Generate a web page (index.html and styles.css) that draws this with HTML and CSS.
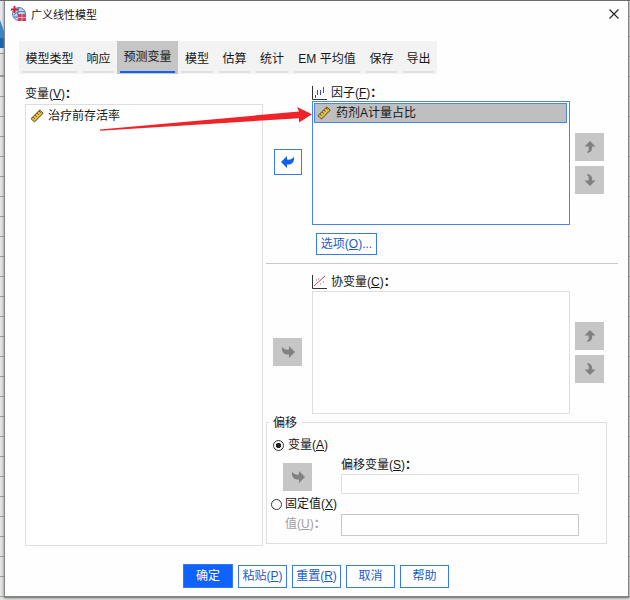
FILE: index.html
```
<!DOCTYPE html>
<html lang="zh-CN">
<head>
<meta charset="utf-8">
<title>广义线性模型</title>
<link rel="stylesheet" href="styles.css">
</head>
<body>
<svg class="symbols" width="0" height="0">
  <symbol id="move" viewBox="0 0 16 14"><path d="M15 7 9 1v3.500C6 5 4 4 2 2c-.5 5 2 8 7 7.500V13z"/></symbol>
  <symbol id="up" viewBox="0 0 12 14"><path d="M6 1 11.500 6.500H8.200C8.500 10 7 12.500 3.300 13V11.500C5 10.500 5 9 4.500 6.500H.5z"/></symbol>
  <symbol id="ruler" viewBox="0 0 14 14"><path d="M1 9.700 9.700 1l3.500 3.200L4.500 13z" fill="#e5bd43" stroke="#54451c"/><path d="m3 8 1.700 1.700M5 6l1.700 1.700M7 4l1.700 1.700M9 2l1.700 1.700" stroke="#6b551d" fill="none"/></symbol>
</svg>
<div class="backdrop"><span class="sheet-top"></span><span class="sheet-side"></span><span class="sheet-blue"></span></div>
<main class="dialog">
  <header class="titlebar">
    <svg class="logo" viewBox="0 0 16 16"><circle cx="8" cy="8" r="6.500" fill="#b9d7ed" stroke="#617da5"/><path d="M3 9q4-5 11-3M8 2q-3 6 1 12M3 11h9" stroke="#4b78b4" fill="none"/><path d="M3.500 0v7M0 3.500h7" stroke="#d41e45" stroke-width="2"/><path d="M7 8h8v7H7z" fill="#cf3c65"/><path d="M7 11.500h8M11 8v7" stroke="#f5c7d5" stroke-width=".7"/></svg>
    <h1>广义线性模型</h1>
    <svg class="close" viewBox="0 0 10 10"><path d="m.5.5 9 9M9.500.5l-9 9"/></svg>
  </header>
  <nav class="tabs">
    <span>模型类型</span><span>响应</span><span class="active">预测变量</span><span>模型</span><span>估算</span><span>统计</span><span>EM 平均值</span><span>保存</span><span>导出</span>
  </nav>
  <div class="content">
    <section class="variables">
      <div class="label">变量(<u>V</u>)<b>：</b></div>
      <div class="list"><div class="item"><svg class="ruler"><use href="#ruler"/></svg>治疗前存活率</div></div>
    </section>
    <section class="right">
      <div class="picker factors">
        <button class="move enabled"><svg><use href="#move"/></svg></button>
        <div class="target">
          <div class="label"><svg class="chart" viewBox="0 0 15 14"><path d="M.5 0v13.500H15" stroke="#333"/><path d="M3.500 9v3M5.500 4v5M8.500 4v5M11.500 1v6" stroke="#4b43c5"/></svg>因子(<u>F</u>)<b>：</b></div>
          <div class="list focused"><div class="item selected"><svg class="ruler"><use href="#ruler"/></svg>药剂A计量占比</div></div>
          <button class="options">选项(<u>O</u>)...</button>
        </div>
        <div class="order"><button><svg><use href="#up"/></svg></button><button><svg class="down"><use href="#up"/></svg></button></div>
      </div>
      <div class="picker covariates">
        <button class="move"><svg><use href="#move"/></svg></button>
        <div class="target">
          <div class="label"><svg class="chart" viewBox="0 0 15 14"><path d="M.5 0v13.500H15" stroke="#333"/><path d="m2 11 11-10" stroke="#b44a5a"/><path d="M4 5h1M6 4h1M8 9h1M11 7h1" stroke="#99606b"/></svg>协变量(<u>C</u>)<b>：</b></div>
          <div class="list"></div>
        </div>
        <div class="order"><button><svg><use href="#up"/></svg></button><button><svg class="down"><use href="#up"/></svg></button></div>
      </div>
      <fieldset class="offset">
        <legend>偏移</legend>
        <label class="radio first"><i class="dot checked"></i>变量(<u>A</u>)</label>
        <div class="offset-row">
          <button class="move"><svg><use href="#move"/></svg></button>
          <div><div class="label">偏移变量(<u>S</u>)<b>：</b></div><div class="field"></div></div>
        </div>
        <div class="fixed-row">
          <div><label class="radio"><i class="dot"></i>固定值(<u>X</u>)</label><div class="value-label">值(<u>U</u>)<b>：</b></div></div>
          <div class="field value"></div>
        </div>
      </fieldset>
    </section>
  </div>
  <footer class="actions">
    <button class="primary">确定</button><button>粘贴(<u>P</u>)</button><button>重置(<u>R</u>)</button><button>取消</button><button>帮助</button>
  </footer>
</main>
<svg class="pointer" viewBox="0 0 214 30"><path d="M0 25.500 199 7.500 197 3l15 7.300L199 18.500v-4.200L0 26.700z"/></svg>
</body>
</html>
```

FILE: styles.css
```
* { box-sizing: border-box; }
body { margin: 0; width: 630px; height: 600px; padding: 1px 0 0 4px; overflow: hidden; background: #d3d5d3; color: #161616; font: 12px/16px "Liberation Sans", "Noto Sans CJK SC", sans-serif; }
.symbols { position: absolute; }
svg { display: block; flex: none; }
.backdrop { position: absolute; inset: 0; z-index: -1; background: repeating-linear-gradient(to bottom, #e5e7e5 0 16px, #a1a3a1 16px 17px, #e5e7e5 17px 20px); }
.sheet-top { position: absolute; inset: 0 0 auto; height: 1px; background: #67656a; }
.sheet-side { position: absolute; left: 0; top: 1px; width: 4px; height: 75px; background: linear-gradient(#e8eaed 0 52px, #999 52px 53px, #e3e3e3 53px 74px, #999 74px); }
.sheet-blue { position: absolute; left: 0; top: 20px; width: 4px; height: 28px; background: #3987ca; border-bottom: 10px solid #1763b0; clip-path: polygon(0 0, 100% 40%, 100% 100%, 0 100%); }
.dialog { width: 625px; height: 597px; background: #fefefe; border: 1px solid #858785; border-width: 0 1px 2px; box-shadow: 0 0 3px #777; }
.titlebar { height: 40px; display: flex; align-items: flex-start; padding: 5px 9px 0 6px; }
.logo { width: 16px; height: 16px; }
h1 { margin: 0 auto 0 4px; font-size: 11px; line-height: 18px; font-weight: 400; }
.close { width: 10px; height: 10px; margin-top: 3px; fill: none; stroke: #222; stroke-width: 1.1; }
.tabs { display: grid; grid-template-columns: 61px 37px 61px 38px 37px 38px 72px 37px 37px; width: 418px; height: 33px; margin-left: 14px; background: #f3f3f3; }
.tabs span { padding: 10px 0 0; margin: 0 3px 1px; text-align: center; white-space: nowrap; border-bottom: 2px solid #e1e1e1; }
.tabs .active { margin: 0; padding-top: 8px; background: linear-gradient(#0f62fe, #0f62fe) center bottom 1px / 55px 2px no-repeat, #c5c5c5; border: 0; }
.content { display: flex; height: 472px; padding: 12px 0 0 20px; gap: 3px; }
.label { display: flex; align-items: center; white-space: nowrap; }
.list { background: #fff; border: 1px solid #dedede; }
.item { display: flex; align-items: center; height: 21px; }
.ruler { width: 14px; height: 14px; margin: 0 4px 0 4px; }
.variables { width: 238px; }
.variables .list { height: 442px; margin-top: 2px; }
.right { width: 352px; }
.picker { display: grid; grid-template-columns: 46px 258px 29px; column-gap: 0; }
.factors { height: 178px; border-bottom: 1px solid #c8c8c8; }
.factors .target { margin-top: -2px; }
.chart { width: 15px; height: 14px; fill: none; margin-right: 4px; }
.target .label { padding-top: 1px; height: 17px; }
.target .list { height: 123px; margin-top: 1px; }
.target .focused { margin-top: 0; height: 124px; padding: 1px 2px 1px 1px; border: 1px solid #4b85e9; }
.selected { height: 20px; background: #bfbfbf; border: 1px solid #4b85e9; }
.selected .ruler { margin: 0 5px 0 2px; }
button { display: flex; align-items: center; justify-content: center; padding: 0; border: 0; background: #c6c6c6; color: #1b5bc9; font: inherit; white-space: nowrap; }
.move { width: 29px; height: 28px; }
.move svg { width: 16px; height: 14px; fill: #818181; }
.picker > .move { margin: 52px 0 0 7px; }
.picker > .enabled { width: 28px; height: 26px; margin: 63px 0 0 8px; border: 1px solid #3979e8; background: #fff; }
.enabled svg { fill: #1261ed; transform: scaleX(-1); }
.options { width: 61px; height: 22px; margin: 8px 0 0 4px; border: 1px solid #3979e8; background: #fff; }
.order { display: flex; flex-direction: column; gap: 5px; margin: 47px 0 0 5px; }
.order button { width: 29px; height: 28px; }
.order svg { width: 12px; height: 14px; fill: #808080; }
.order .down { transform: scaleY(-1); }
.covariates { height: 150px; padding-top: 9px; }
.covariates > .move { margin-top: 65px; }
.covariates .order { margin-top: 49px; }
.offset { position: relative; width: 341px; height: 122px; margin: 8px 0 0; padding: 0; border: 1px solid #dedede; }
legend { position: absolute; top: -8px; left: 2px; padding: 0 4px; background: #fefefe; }
.radio { display: flex; align-items: center; }
.first { margin: 14px 0 0 6px; }
.dot { width: 11px; height: 11px; margin-right: 4px; border: 1px solid #353535; border-radius: 50%; }
.checked { background: radial-gradient(circle, #222 0 2.3px, transparent 3px); }
.offset-row { display: flex; gap: 29px; margin: 4px 0 0 16px; }
.offset-row .move { margin-top: 6px; }
.field { width: 238px; height: 20px; margin-top: 1px; border: 1px solid #dedede; background: #fff; }
.fixed-row { display: grid; grid-template-columns: 70px 238px; margin: 2px 0 0 4px; }
.fixed-row .dot { margin-right: 3px; }
.value-label { margin: 4px 0 0 14px; color: #a0a0a0; }
.value { height: 22px; margin-top: 18px; border-color: #c7c7c7; }
.actions { display: flex; align-items: center; gap: 5px; height: 24px; margin: 18px 0 0 178px; }
.actions button { width: 49px; height: 23px; background: #fff; border: 1px solid #3979e8; }
.actions .primary { width: 50px; height: 24px; background: #0f62fe; color: #fff; }
.pointer { position: absolute; left: 100px; top: 104px; width: 214px; height: 30px; overflow: visible; fill: #ee2428; pointer-events: none; }
```
